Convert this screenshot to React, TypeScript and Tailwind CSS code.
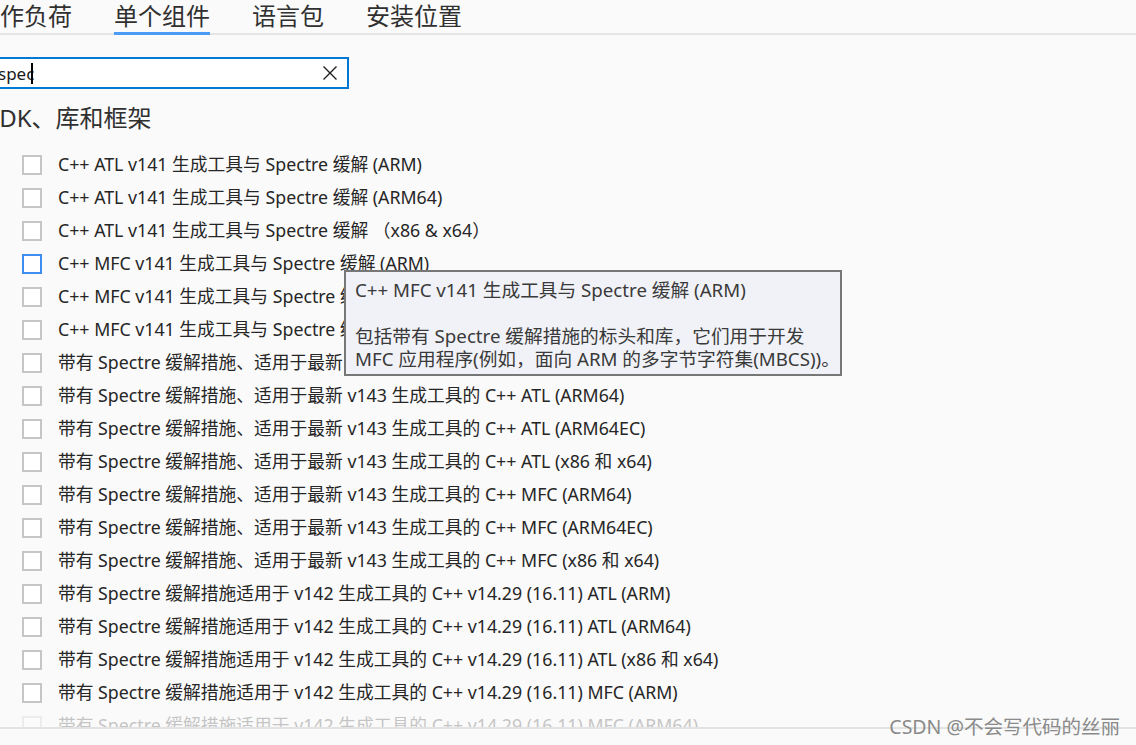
import React from 'react';

const v141 = [
  'C++ ATL v141 生成工具与 Spectre 缓解 (ARM)',
  'C++ ATL v141 生成工具与 Spectre 缓解 (ARM64)',
  'C++ ATL v141 生成工具与 Spectre 缓解 （x86 & x64）',
  'C++ MFC v141 生成工具与 Spectre 缓解 (ARM)',
  'C++ MFC v141 生成工具与 Spectre 缓解 (ARM64)',
  'C++ MFC v141 生成工具与 Spectre 缓解 （x86 & x64）',
];

const v143 = ['ATL (ARM)', 'ATL (ARM64)', 'ATL (ARM64EC)', 'ATL (x86 和 x64)', 'MFC (ARM64)', 'MFC (ARM64EC)', 'MFC (x86 和 x64)'].map(
  (s) => `带有 Spectre 缓解措施、适用于最新 v143 生成工具的 C++ ${s}`
);

const v142 = ['ATL (ARM)', 'ATL (ARM64)', 'ATL (x86 和 x64)', 'MFC (ARM)', 'MFC (ARM64)'].map(
  (s) => `带有 Spectre 缓解措施适用于 v142 生成工具的 C++ v14.29 (16.11) ${s}`
);

const items = [...v141, ...v143, ...v142];

const tabs = [
  { label: '工作负荷', active: false },
  { label: '单个组件', active: true },
  { label: '语言包', active: false },
  { label: '安装位置', active: false },
];

export default function App() {
  return (
    <div className="relative w-[1136px] h-[745px] overflow-hidden bg-[#fafafa] text-[#262626] font-['Noto_Sans','Noto_Sans_CJK_SC',sans-serif]">
      <div className="h-[727px] overflow-hidden flex flex-col">
        {/* Tabs */}
        <div className="h-[35px] shrink-0 border-b-2 border-[#e5e5e5] flex items-stretch">
          <div className="flex gap-[42px] -ml-[24px]">
            {tabs.map((t) => (
              <div
                key={t.label}
                className={`text-[24px] leading-[32px] text-[#303030] ${t.active ? 'border-b-[3px] border-[#4a9cf6] -mb-[2px]' : ''}`}
              >
                {t.label}
              </div>
            ))}
          </div>
        </div>

        {/* Search */}
        <div className="mt-[22px] -ml-[24px] w-[373px] h-[32px] shrink-0 border-2 border-[#0078d4] bg-white flex items-center pl-[20px] pr-[8px]">
          <span className="text-[17px] leading-none text-[#1a1a1a]">spec</span>
          <span className="w-[2px] h-[21px] bg-black -ml-[3px]" />
          <div className="flex-1" />
          <svg width="16" height="16" viewBox="0 0 16 16" className="mr-[1px]">
            <path d="M1.5 1.5 L14.5 14.5 M14.5 1.5 L1.5 14.5" stroke="#1f1f1f" strokeWidth="1.4" fill="none" />
          </svg>
        </div>

        {/* Heading */}
        <div className="mt-[13px] -ml-[14px] text-[24px] leading-[32px] text-[#303030] shrink-0">SDK、库和框架</div>

        {/* List */}
        <div className="mt-[14px] flex flex-col">
          {items.map((label, i) => {
            const hovered = i === 3;
            const faded = i === items.length - 1;
            return (
              <div key={label} className={`h-[33px] shrink-0 flex items-center pl-[22px] gap-[16px] ${faded ? 'opacity-25' : ''}`}>
                <div className={`w-[20px] h-[20px] shrink-0 border-2 bg-white ${hovered ? 'border-[#3d8ef0]' : 'border-[#c6c6c6]'}`} />
                <span className="text-[17.75px] leading-none whitespace-nowrap">{label}</span>
              </div>
            );
          })}
        </div>
      </div>
      <div className="h-[2px] bg-[#e3e3e3]" />

      {/* Tooltip */}
      <div className="absolute left-[344px] top-[270px] w-[498px] h-[106px] border-2 border-[#777777] bg-[#f1f2f8] px-[9px] pt-[6px] text-[18.7px] leading-[23px] text-[#3a3a3a] whitespace-nowrap">
        <div>C++ MFC v141 生成工具与 Spectre 缓解 (ARM)</div>
        <div className="h-[23px]" />
        <div>包括带有 Spectre 缓解措施的标头和库，它们用于开发</div>
        <div>MFC 应用程序(例如，面向 ARM 的多字节字符集(MBCS))。</div>
      </div>

      {/* Watermark */}
      <div className="absolute right-[16px] top-[714px] text-[19.5px] leading-[26px] text-[#8a8a8a] whitespace-nowrap">
        CSDN @不会写代码的丝丽
      </div>
    </div>
  );
}
